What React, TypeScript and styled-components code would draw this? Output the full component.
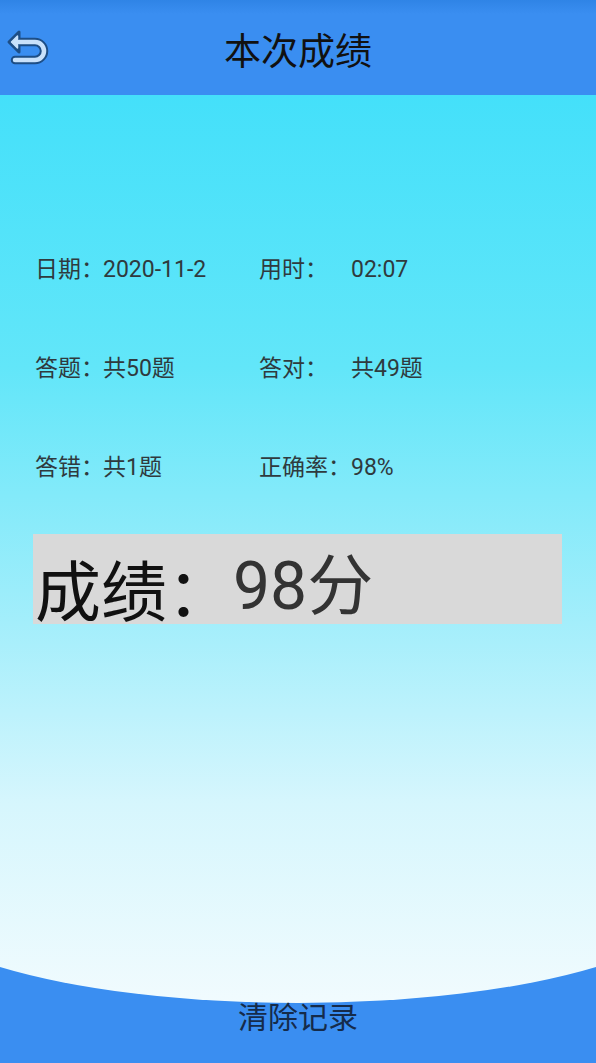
import styled, { createGlobalStyle } from "styled-components";

const GlobalStyle = createGlobalStyle`
    html, body {
        margin: 0;
        padding: 0;
    }
    body {
        font-family: Roboto, "Noto Sans CJK SC", sans-serif;
        background: #3a8ef1;
    }
`;

const stats = [
    { label: '日期：', value: '2020-11-2', label2: '用时：', value2: '02:07' },
    { label: '答题：', value: '共50题', label2: '答对：', value2: '共49题' },
    { label: '答错：', value: '共1题', label2: '正确率：', value2: '98%' },
];

const BackIcon = () => (
    <svg width="44" height="44" viewBox="0 0 44 44">
        <g fill="#1d4e86" stroke="#1d4e86" strokeLinejoin="round" strokeLinecap="round">
            <path d="M13 15 H29 A9 9 0 0 1 29 33 H9" fill="none" strokeWidth="8.5" />
            <polygon points="3,15 13,5 13,25" strokeWidth="3" />
        </g>
        <g fill="#c8e1fb" stroke="#c8e1fb" strokeLinejoin="round" strokeLinecap="round">
            <path d="M13 15 H29 A9 9 0 0 1 29 33 H9" fill="none" strokeWidth="4.5" />
            <polygon points="5.5,15 11.5,9 11.5,21" strokeWidth="1.5" />
        </g>
    </svg>
);

const App = () => {
    return (
        <Page>
            <GlobalStyle />
            <Header>
                <BackButton><BackIcon /></BackButton>
                <Title>本次成绩</Title>
            </Header>

            <Main>
                <StatsGrid>
                    {stats.map((s) => (
                        <Row key={s.label}>
                            <Cell>{s.label}</Cell>
                            <Cell>{s.value}</Cell>
                            <Cell>{s.label2}</Cell>
                            <Cell>{s.value2}</Cell>
                        </Row>
                    ))}
                </StatsGrid>

                <ScoreBox>
                    <ScoreLabel>成绩：</ScoreLabel>
                    <ScoreValue>98分</ScoreValue>
                </ScoreBox>
            </Main>

            <Footer>
                <ClearButton>清除记录</ClearButton>
            </Footer>
        </Page>
    )
}

export default App;

const Page = styled.div`
    width: 596px;
    height: 1063px;
    display: flex;
    flex-direction: column;
    overflow: hidden;
    background: #3a8ef1;
`;
const Header = styled.header`
    height: 95px;
    flex-shrink: 0;
    position: relative;
    display: flex;
    align-items: center;
    justify-content: center;
    background: linear-gradient(#2f84e6 0px, #3a8ef1 14px, #3a8ef1 100%);
`;
const BackButton = styled.div`
    position: absolute;
    left: 6px;
    top: 27px;
    width: 44px;
    height: 44px;
    cursor: pointer;
`;
const Title = styled.h1`
    margin: 0;
    font-family: "Noto Sans CJK SC", sans-serif;
    font-size: 37px;
    font-weight: 400;
    color: #111;
    line-height: 1;
    padding-top: 3px;
`;
/* main panel runs under the footer and is cut to a wide curve at its bottom */
const Main = styled.main`
    height: 908px;
    flex-shrink: 0;
    box-sizing: border-box;
    display: flex;
    flex-direction: column;
    padding: 159px 0 0 33px;
    background: linear-gradient(#44e0fa 0%, #62e6f9 30%, #a3eefb 58%, #d6f6fd 78%, #f1fbfe 100%);
    clip-path: path('M0 0 H596 V872 A400 108 0 0 1 0 872 Z');
`;
const StatsGrid = styled.div`
    display: flex;
    flex-direction: column;
    gap: 67px;
    padding-left: 2px;
`;
const Row = styled.div`
    display: grid;
    grid-template-columns: 68px 156px 92px auto;
    font-size: 23px;
    line-height: 32px;
    color: #2f3a3e;
`;
const Cell = styled.span`
    white-space: nowrap;
`;
const ScoreBox = styled.div`
    margin-top: 50px;
    width: 529px;
    height: 90px;
    box-sizing: border-box;
    padding: 20px 0 0 2px;
    background: #d9d9d9;
    display: flex;
    font-size: 66px;
    line-height: 66px;
`;
const ScoreLabel = styled.span`
    font-family: "Noto Sans CJK SC", sans-serif;
    color: #111;
`;
const ScoreValue = styled.span`
    color: #333;
`;
const Footer = styled.footer`
    flex: 1;
    margin-top: -36px;
    position: relative;
    display: flex;
    justify-content: center;
    box-sizing: border-box;
    padding-top: 29px;
`;
const ClearButton = styled.div`
    font-family: "Noto Sans CJK SC", sans-serif;
    font-size: 30px;
    line-height: 38px;
    height: 38px;
    color: #152b4a;
    cursor: pointer;
`;
